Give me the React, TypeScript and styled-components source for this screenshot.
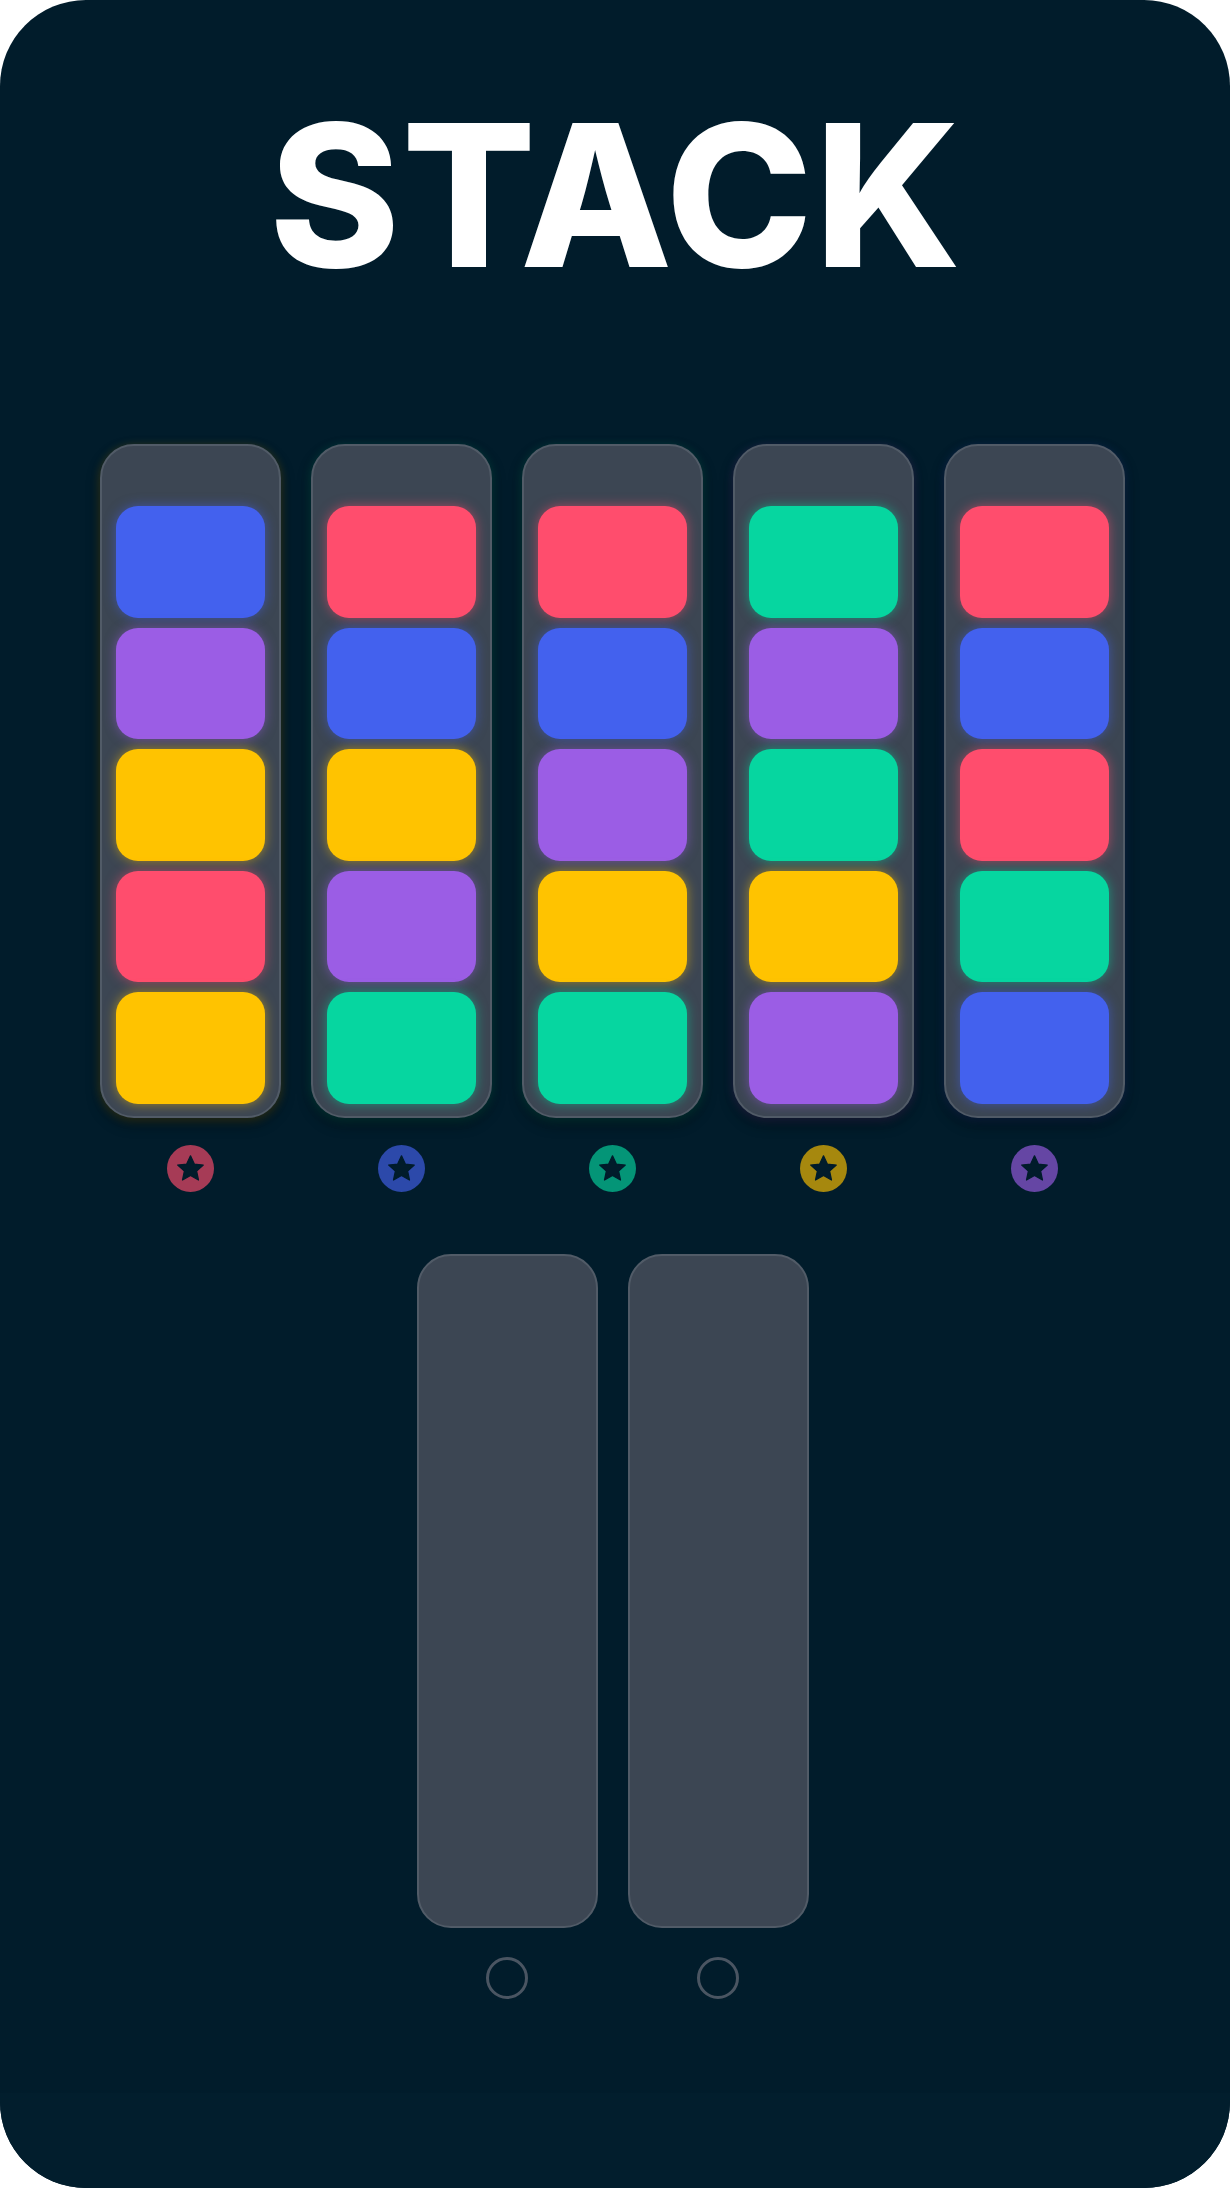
import React from "react";
import styled, { createGlobalStyle } from "styled-components";

const GlobalStyle = createGlobalStyle`
  html, body { margin: 0; padding: 0; background: #ffffff; }
  body { font-family: Inter, "Noto Sans", sans-serif; }
`;

const COLORS: Record<string, string> = {
  blue: "#4361ee",
  purple: "#9b5de5",
  yellow: "#ffc300",
  red: "#ff4d6d",
  green: "#06d6a0",
};

const tubes: { blocks: string[]; star: string }[] = [
  { blocks: ["blue", "purple", "yellow", "red", "yellow"], star: "red" },
  { blocks: ["red", "blue", "yellow", "purple", "green"], star: "blue" },
  { blocks: ["red", "blue", "purple", "yellow", "green"], star: "green" },
  { blocks: ["green", "purple", "green", "yellow", "purple"], star: "yellow" },
  { blocks: ["red", "blue", "red", "green", "blue"], star: "purple" },
];

const Screen = styled.div`
  width: 1230px;
  height: 2188px;
  background: #011c2b;
  border-radius: 86px;
  overflow: hidden;
  display: flex;
  flex-direction: column;
  align-items: center;
`;

const Title = styled.h1`
  margin: 96px -2px 0 0;
  font-family: Inter, "Liberation Sans", sans-serif;
  font-weight: 800;
  font-size: 198px;
  line-height: 1;
  color: #ffffff;
  letter-spacing: 2px;
`;

const Board = styled.div`
  flex: 1;
  display: flex;
  flex-direction: column;
  align-items: center;
  margin-top: 150px;
  padding-right: 5px;
`;

const Row = styled.div`
  display: flex;
  gap: 30px;
`;

const Column = styled.div`
  width: 181px;
  display: flex;
  flex-direction: column;
  align-items: center;
  gap: 27px;
`;

const Tube = styled.div<{ $glow?: string }>`
  box-sizing: border-box;
  width: 181px;
  height: 674px;
  background: #3c4653;
  border: 2px solid #515b67;
  border-radius: 34px;
  padding: 60px 14px 12px;
  display: flex;
  flex-direction: column;
  gap: 10px;
  box-shadow: ${(p) =>
    p.$glow
      ? `0 6px 14px rgba(0, 0, 0, 0.45), 0 2px 10px ${p.$glow}40`
      : "none"};
`;

const Block = styled.div<{ $color: string }>`
  height: 112px;
  border-radius: 22px;
  background: ${(p) => p.$color};
  box-shadow: 0 0 12px ${(p) => p.$color}88;
`;

const StarBadge = styled.div<{ $color: string }>`
  width: 47px;
  height: 47px;
  border-radius: 50%;
  background: ${(p) => p.$color};
  opacity: 0.65;
  display: flex;
  align-items: center;
  justify-content: center;
`;

const EmptyBadge = styled.div`
  box-sizing: border-box;
  width: 42px;
  height: 42px;
  border-radius: 50%;
  border: 3px solid #4a5562;
`;

const SpareRow = styled(Row)`
  margin-top: 62px;
`;

const SpareColumn = styled(Column)`
  gap: 29px;
`;

const Footer = styled.div`
  width: 100%;
  height: 95px;
  background: #021e2d;
`;

const Star = () => (
  <svg width="31" height="31" viewBox="0 0 24 24" aria-hidden="true">
    <path
      d="M12 2.2l2.95 6.35 6.95.78-5.17 4.72 1.43 6.85L12 17.4l-6.16 3.5 1.43-6.85L2.1 9.33l6.95-.78z"
      fill="#011c2b"
      stroke="#011c2b"
      strokeWidth="1"
      strokeLinejoin="round"
    />
  </svg>
);

export default function App() {
  return (
    <>
      <GlobalStyle />
      <Screen>
        <Title>STACK</Title>
        <Board>
          <Row>
            {tubes.map((t, i) => (
              <Column key={i}>
                <Tube $glow={COLORS[t.blocks[t.blocks.length - 1]]}>
                  {t.blocks.map((b, j) => (
                    <Block key={j} $color={COLORS[b]} />
                  ))}
                </Tube>
                <StarBadge $color={COLORS[t.star]}>
                  <Star />
                </StarBadge>
              </Column>
            ))}
          </Row>
          <SpareRow>
            {[0, 1].map((i) => (
              <SpareColumn key={i}>
                <Tube />
                <EmptyBadge />
              </SpareColumn>
            ))}
          </SpareRow>
        </Board>
        <Footer />
      </Screen>
    </>
  );
}
